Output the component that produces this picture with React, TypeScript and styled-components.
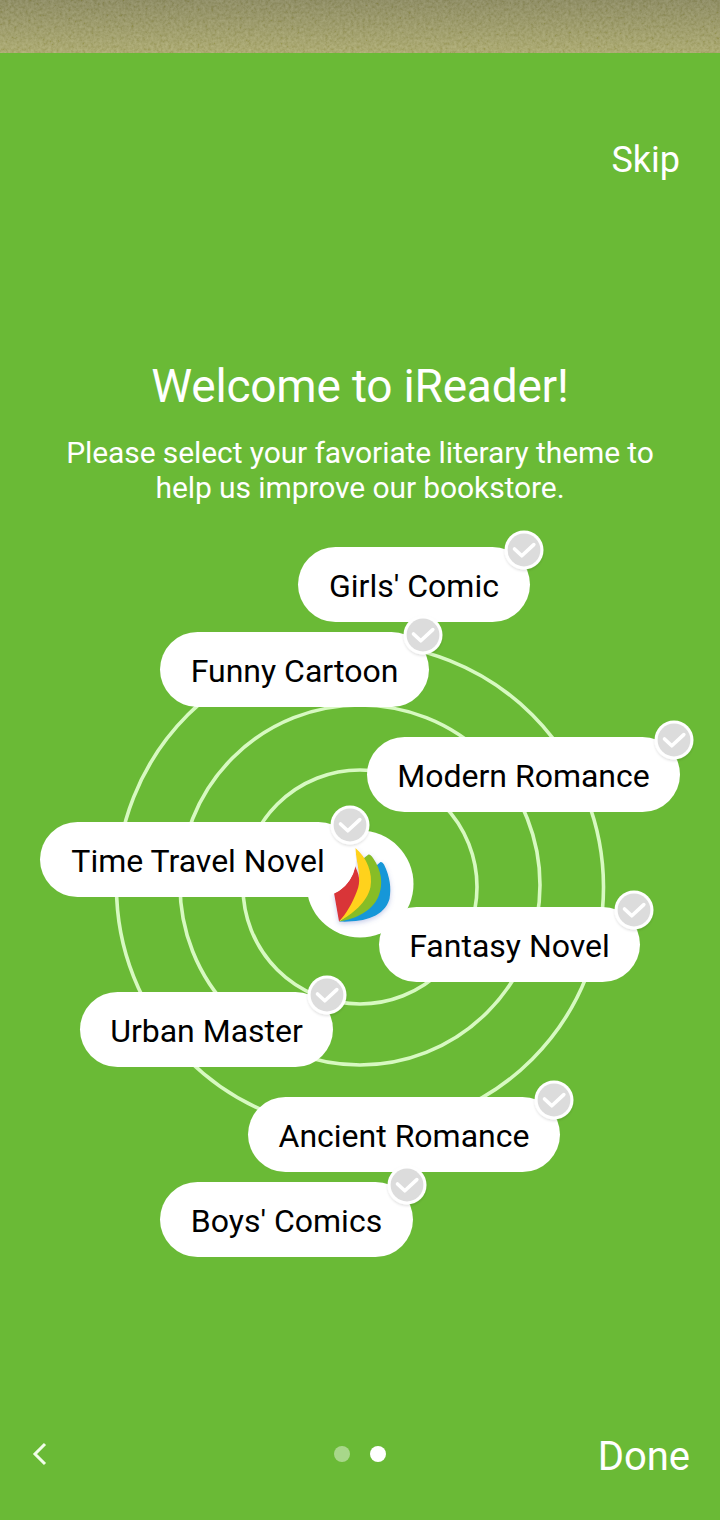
import React from 'react';
import styled, { createGlobalStyle } from 'styled-components';

const GlobalStyle = createGlobalStyle`
  * { box-sizing: border-box; }
  body { margin: 0; background: #6aba36; }
`;

const Screen = styled.main`
  width: 720px;
  height: 1520px;
  display: flex;
  flex-direction: column;
  overflow: hidden;
  background: #6aba36;
  color: #fff;
  font-family: Roboto, sans-serif;
`;

const StatusBar = styled.div`
  height: 53px;
  flex: none;
  background: linear-gradient(#85835a, #a9a76a);
  svg { display: block; }
`;

const TextButton = styled.button<{ $size: number; $drop: number }>`
  padding: ${p => p.$drop}px 0 0;
  border: 0;
  background: none;
  color: inherit;
  font: 400 ${p => p.$size}px/1.2 Roboto, sans-serif;
`;

const TopBar = styled.header`
  height: 213px;
  flex: none;
  display: flex;
  justify-content: flex-end;
  align-items: center;
  padding: 0 40px 0 0;
`;

const Intro = styled.section`
  height: 266px;
  flex: none;
  text-align: center;
  padding-top: 93px;
`;

const Title = styled.h1`
  margin: 0;
  font-size: 46px;
  font-weight: 400;
  line-height: 54px;
  letter-spacing: -0.2px;
`;

const Subtitle = styled.p`
  margin: 22px 0 0;
  font-size: 30px;
  line-height: 35px;
  letter-spacing: -0.09px;
`;

const ThemeCanvas = styled.section`
  position: relative;
  height: 768px;
  flex: none;
`;

const Orbit = styled.svg`
  display: block;
`;

const Pill = styled.button<{ $x: number; $y: number; $w: number }>`
  position: absolute;
  left: ${p => p.$x}px;
  top: ${p => p.$y}px;
  width: ${p => p.$w}px;
  height: 75px;
  padding: 3px 0 0;
  border: 0;
  border-radius: 38px;
  background: #fff;
  color: #000;
  font: 400 32px/38px Roboto, sans-serif;
  white-space: nowrap;
`;

const Badge = styled.svg`
  position: absolute;
  top: -19px;
  right: -16px;
`;

const Footer = styled.footer`
  height: 132px;
  margin-top: auto;
  display: grid;
  grid-template-columns: 1fr auto 1fr;
  align-items: center;
  padding: 0 30px;
`;

const BackButton = styled.button`
  display: flex;
  padding: 0;
  border: 0;
  background: none;
`;

const Dots = styled.div`
  display: flex;
  gap: 20px;
`;

const Dot = styled.span<{ $active?: boolean }>`
  width: 16px;
  height: 16px;
  border-radius: 50%;
  background: ${p => (p.$active ? '#fff' : 'rgba(255, 255, 255, 0.42)')};
`;

const DoneSlot = styled.div`
  display: flex;
  justify-content: flex-end;
`;

const themes = [
  { label: "Girls' Comic", x: 298, y: 15, w: 232 },
  { label: 'Funny Cartoon', x: 160, y: 100, w: 269 },
  { label: 'Modern Romance', x: 367, y: 205, w: 313 },
  { label: 'Time Travel Novel', x: 40, y: 290, w: 316 },
  { label: 'Fantasy Novel', x: 379, y: 375, w: 261 },
  { label: 'Urban Master', x: 80, y: 460, w: 253 },
  { label: 'Ancient Romance', x: 248, y: 565, w: 312 },
  { label: "Boys' Comics", x: 160, y: 650, w: 253 },
];

function CheckBadge() {
  return (
    <Badge width="44" height="46" viewBox="0 0 44 46">
      <defs>
        <filter id="badgeShadow" x="-20%" y="-20%" width="140%" height="150%">
          <feDropShadow dx="0" dy="1.5" stdDeviation="1.2" floodColor="#000" floodOpacity="0.12" />
        </filter>
      </defs>
      <circle cx="22" cy="22" r="19.5" fill="#fff" filter="url(#badgeShadow)" />
      <circle cx="22" cy="22" r="16.4" fill="#dcdcdc" />
      <path d="M12.5 21 L19.8 27.8 L31.8 16.6" fill="none" stroke="#fff" strokeWidth="3.6" strokeLinecap="round" strokeLinejoin="round" />
    </Badge>
  );
}

function OrbitArt() {
  return (
    <Orbit width="720" height="768" viewBox="0 532 720 768">
      <defs>
        <filter id="logoShadow" x="-30%" y="-30%" width="160%" height="160%">
          <feDropShadow dx="0" dy="2" stdDeviation="2.5" floodColor="#6070c0" floodOpacity="0.35" />
        </filter>
      </defs>
      <g fill="none" stroke="#d7f9c1" strokeWidth="3.6">
        <circle cx="360" cy="887" r="117" />
        <circle cx="360" cy="885" r="180" />
        <circle cx="360" cy="887" r="243.5" />
      </g>
      <circle cx="360" cy="884" r="53.5" fill="#fff" />
      <g filter="url(#logoShadow)">
        <path d="M377 865 L380.5 862 Q382.5 861.5 384 864.5 C390 877 391.5 888 389.5 899 C384 918 361 922.5 339 921.5 C367 910 376 891 375 872 Z" fill="#1597d8" />
        <path d="M364 858 L368.5 854.5 Q370.5 854 373 858 C382 871 383 884 379 895 C373 911 356 919 339 921.5 C359 908 366 888 363 868 Z" fill="#87bd25" />
        <path d="M355.5 848 C367 858 373 873 370.5 887 C367 903 352 914 339 921.5 C349 904 358 890 359 878 C359 868 356 860 355.5 848 Z" fill="#ffd21a" />
        <path d="M355 866 C359 874 361 881 357 891 C352 904 346 914 339 921.5 L334 893 C345 889 353 878 355 866 Z" fill="#d93637" />
      </g>
    </Orbit>
  );
}

export default function App() {
  return (
    <>
      <GlobalStyle />
      <Screen>
        <StatusBar>
          <svg width="720" height="53">
            <filter id="grain" x="0" y="0" width="100%" height="100%">
              <feTurbulence type="fractalNoise" baseFrequency="0.35" numOctaves="3" seed="4" />
              <feColorMatrix values="0.9 0 0 0 0.04  0.9 0 0 0 0.04  0.9 0 0 0 -0.15  0 0 0 0 0.22" />
            </filter>
            <rect width="720" height="53" filter="url(#grain)" />
          </svg>
        </StatusBar>
        <TopBar>
          <TextButton $size={36} $drop={2}>Skip</TextButton>
        </TopBar>
        <Intro>
          <Title>Welcome to iReader!</Title>
          <Subtitle>
            Please select your favoriate literary theme to
            <br />
            help us improve our bookstore.
          </Subtitle>
        </Intro>
        <ThemeCanvas>
          <OrbitArt />
          {themes.map(t => (
            <Pill key={t.label} $x={t.x} $y={t.y} $w={t.w}>
              {t.label}
              <CheckBadge />
            </Pill>
          ))}
        </ThemeCanvas>
        <Footer>
          <BackButton aria-label="Back">
            <svg width="20" height="26" viewBox="0 0 20 26" fill="none" stroke="#f1fde9" strokeWidth="3">
              <path d="M15 3 L5 13 L15 23" />
            </svg>
          </BackButton>
          <Dots>
            <Dot />
            <Dot $active />
          </Dots>
          <DoneSlot>
            <TextButton $size={40} $drop={6}>Done</TextButton>
          </DoneSlot>
        </Footer>
      </Screen>
    </>
  );
}
